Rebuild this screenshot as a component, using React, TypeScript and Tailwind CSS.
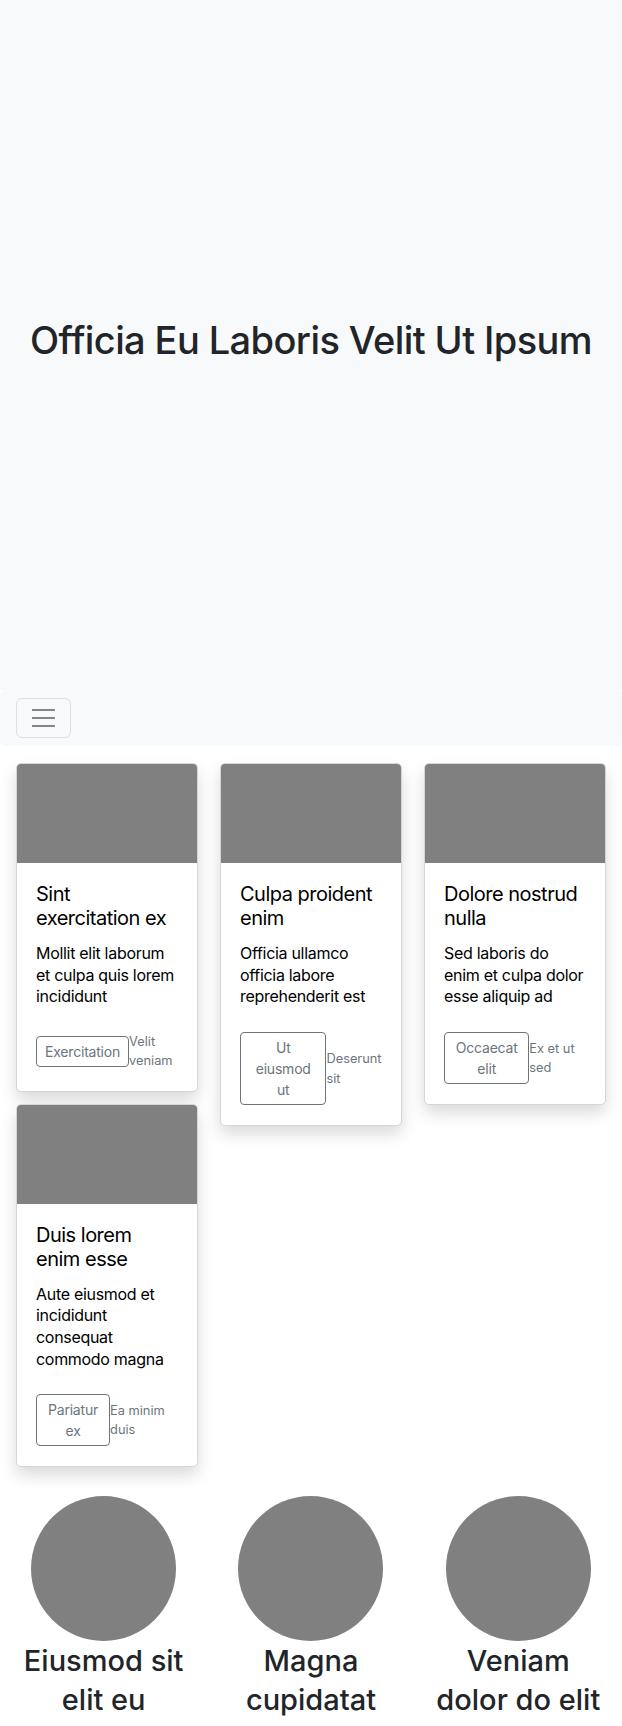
import React from 'react';

interface CardProps {
  title: string;
  text: string;
  btn: string;
  note: string;
}

const Card: React.FC<CardProps> = ({ title, text, btn, note }) => {
  return (
    <div className="bg-white border border-[#d6d6d6] rounded-[5px] overflow-hidden shadow-[0_8px_16px_rgba(0,0,0,0.15)]">
      <div className="h-[99px] bg-[#808080]"></div>
      <div className="pt-[19px] px-[19px] pb-[20px]">
        <h5 className="text-[20px] leading-6 tracking-[-0.5px] mb-[13px] text-black">{title}</h5>
        <p className="text-[16px] leading-[21.7px] tracking-[-0.3px] text-black mb-6">{text}</p>
        <div className="flex items-center">
          <button className="border border-[#6c757d] rounded-[4px] px-2 py-1 text-[14px] leading-[21px] tracking-[-0.2px] text-[#6c757d] text-center">
            {btn}
          </button>
          <small className="text-[12.8px] leading-[19.2px] text-[#6c757d]">{note}</small>
        </div>
      </div>
    </div>
  );
};

const people = ['Eiusmod sit elit eu', 'Magna cupidatat', 'Veniam dolor do elit'];

export default function App() {
  return (
    <div className="bg-white min-h-[1726px] text-[#212529]" style={{ fontFamily: 'Inter, "Liberation Sans", sans-serif' }}>
      {/* hero */}
      <section className="h-[690px] bg-[#f8f9fa] flex items-center justify-center">
        <h1 className="text-[38px] leading-[45.6px] tracking-[-0.6px] font-medium mb-2 text-center">Officia Eu Laboris Velit Ut Ipsum</h1>
      </section>

      {/* navbar */}
      <nav className="h-14 bg-[#f8f9fa] rounded-md flex items-center px-4">
        <button className="w-[55px] h-10 border border-[#dddee0] rounded-[6px] flex flex-col items-center justify-center gap-[6px]">
          <span className="block w-[23px] h-[2px] bg-[#858688]"></span>
          <span className="block w-[23px] h-[2px] bg-[#858688]"></span>
          <span className="block w-[23px] h-[2px] bg-[#858688]"></span>
        </button>
      </nav>

      {/* cards */}
      <section className="flex gap-[22px] px-4 pt-[17px] items-start">
        <div className="flex-1 flex flex-col gap-3">
          <Card
            title="Sint exercitation ex"
            text="Mollit elit laborum et culpa quis lorem incididunt"
            btn="Exercitation"
            note="Velit veniam"
          />
          <Card
            title="Duis lorem enim esse"
            text="Aute eiusmod et incididunt consequat commodo magna"
            btn="Pariatur ex"
            note="Ea minim duis"
          />
        </div>
        <div className="flex-1">
          <Card
            title="Culpa proident enim"
            text="Officia ullamco officia labore reprehenderit est"
            btn="Ut eiusmod ut"
            note="Deserunt sit"
          />
        </div>
        <div className="flex-1">
          <Card
            title="Dolore nostrud nulla"
            text="Sed laboris do enim et culpa dolor esse aliquip ad"
            btn="Occaecat elit"
            note="Ex et ut sed"
          />
        </div>
      </section>

      {/* people */}
      <section className="grid grid-cols-3 pt-[29px]">
        {people.map((name) => (
          <div key={name} className="flex flex-col items-center px-4">
            <div className="w-[145px] h-[145px] rounded-full bg-[#808080]"></div>
            <div className="text-[29px] leading-[39px] text-center text-[#212529] font-medium">{name}</div>
          </div>
        ))}
      </section>
    </div>
  );
}
